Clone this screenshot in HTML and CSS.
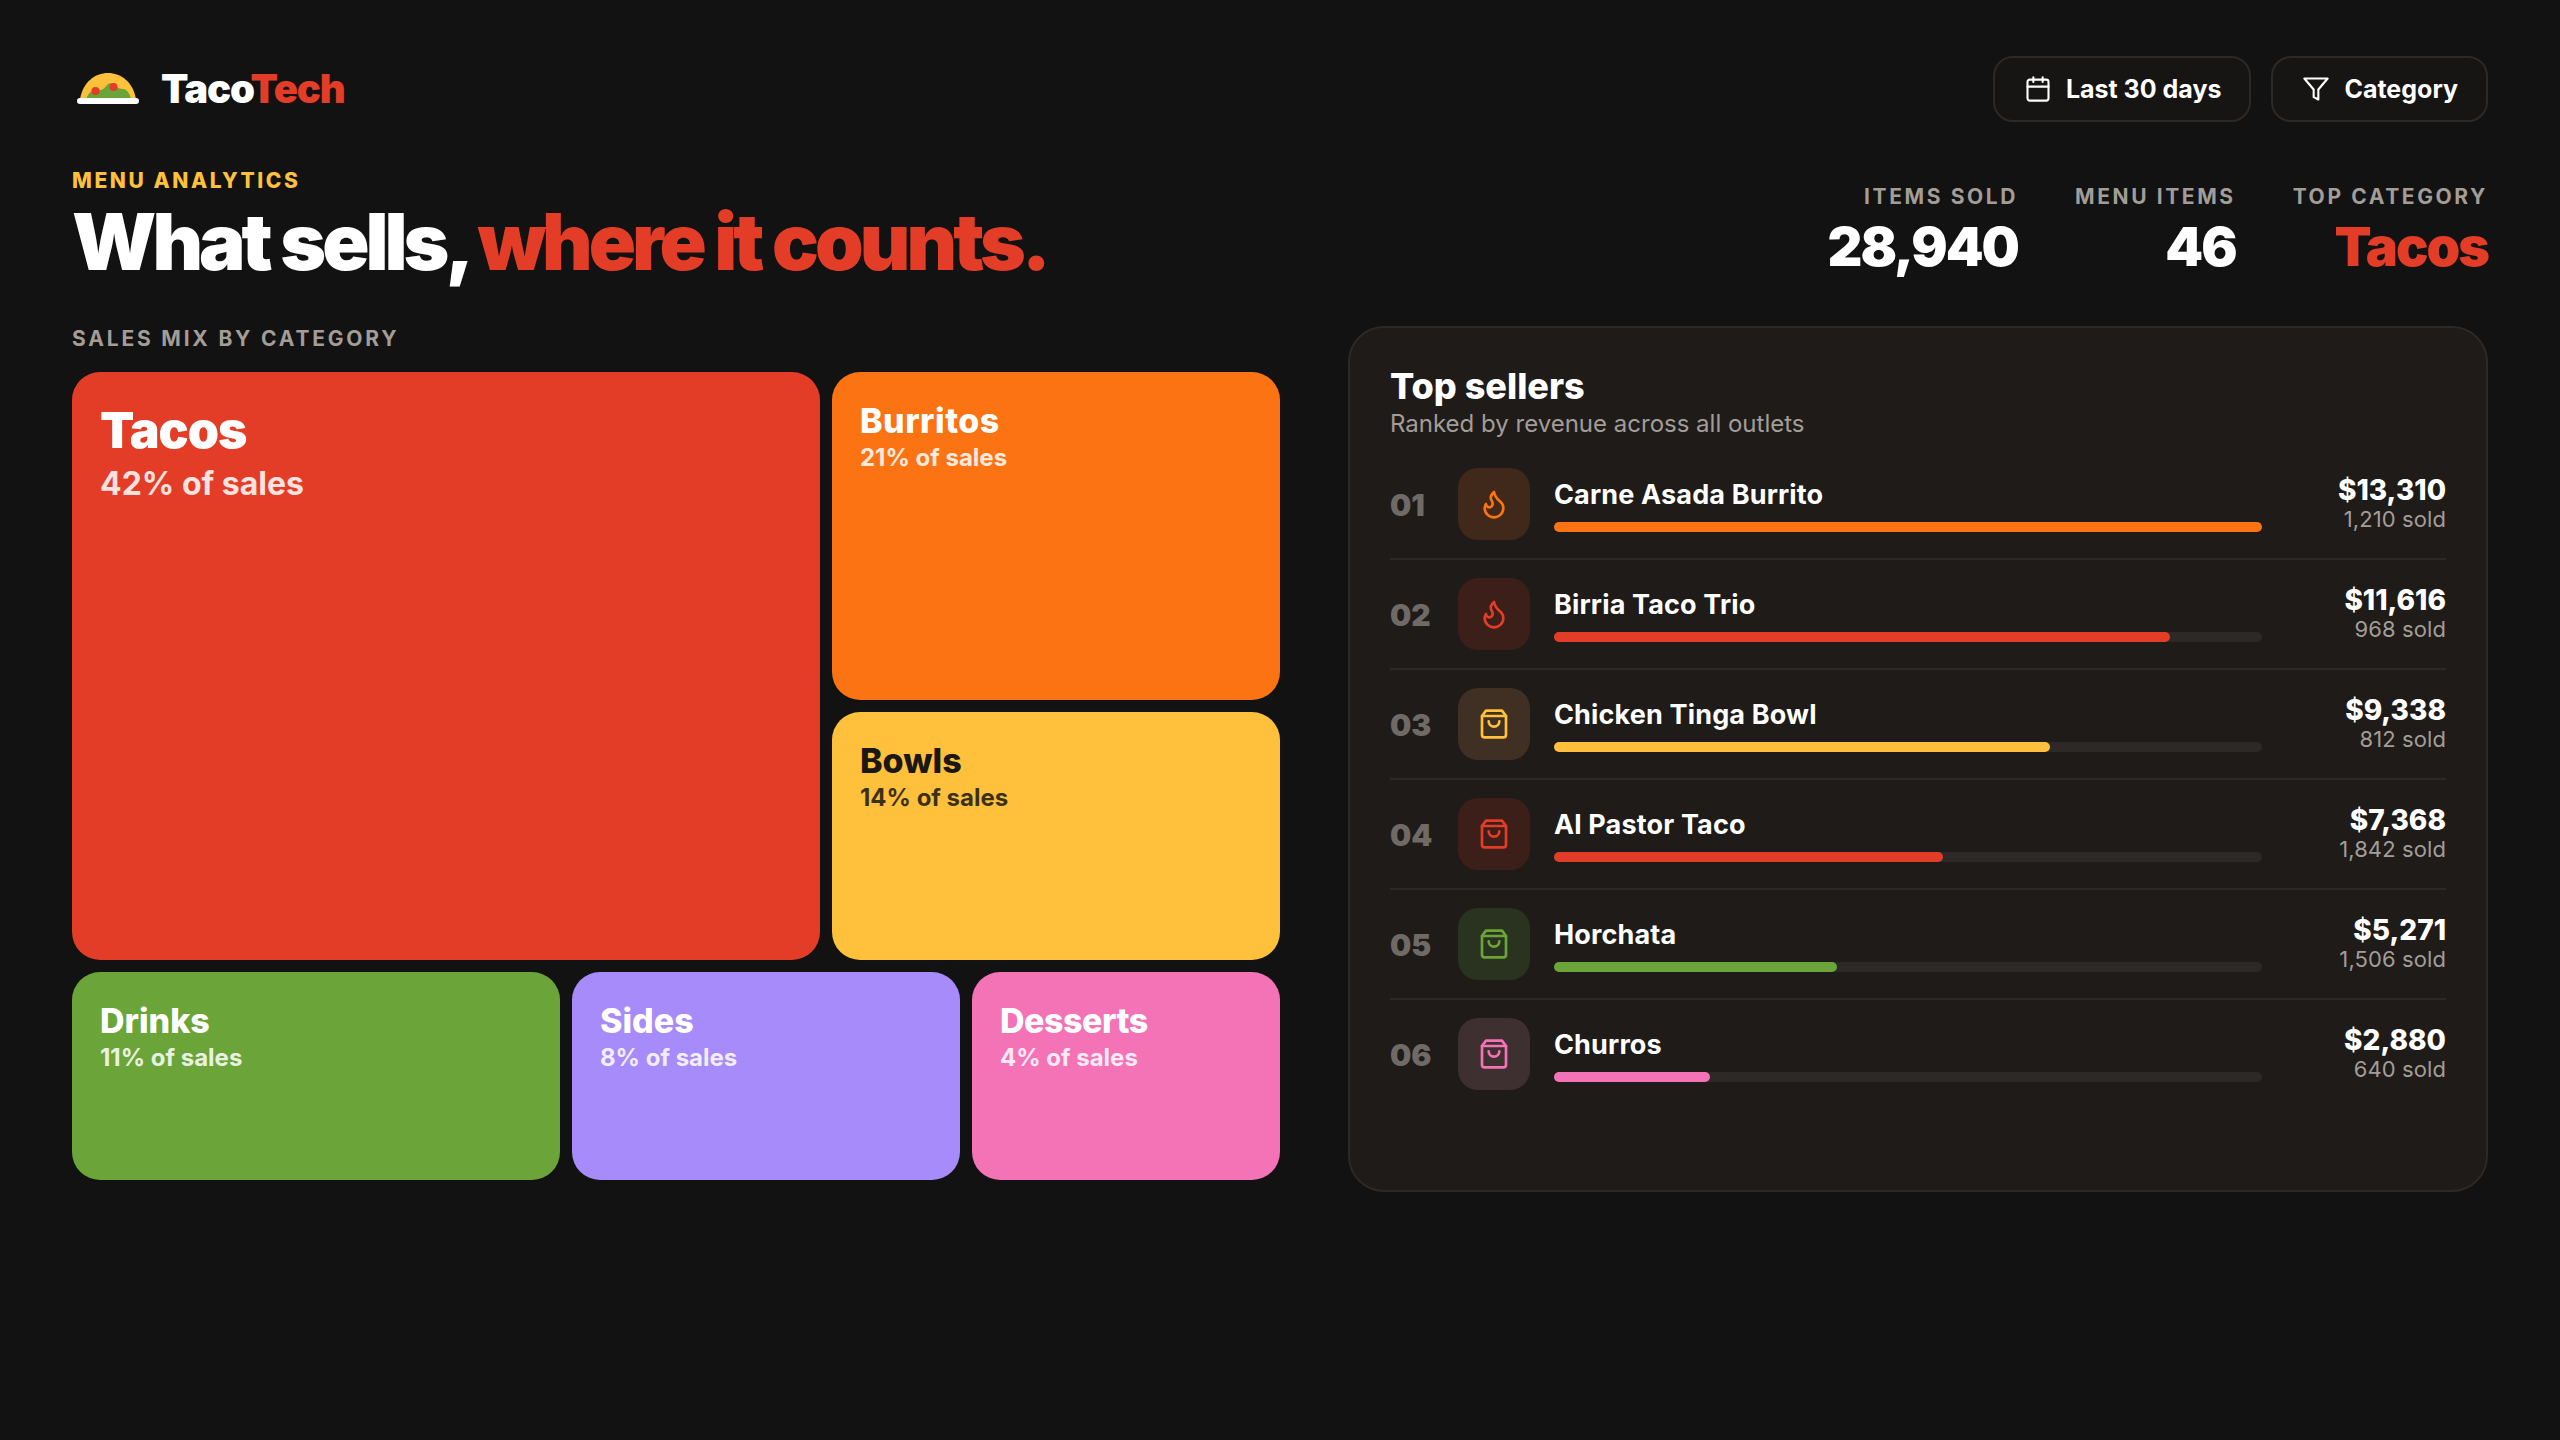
FILE: index.html
```html
<!DOCTYPE html>
<html lang="en">

<head>
    <meta charset="UTF-8">
    <title>TacoTech</title>
    <link rel="stylesheet" href="styles.css">
</head>

<body>
    <svg class="defs" width="0" height="0">
        <symbol id="i-flame" viewBox="0 0 24 24">
            <path d="M8.5 14.5A2.5 2.5 0 0 0 11 12c0-1.38-.5-2-1-3-1.072-2.143-.224-4.054 2-6 .5 2.5 2 4.9 4 6.5 2 1.6 3 3.5 3 5.5a7 7 0 1 1-14 0c0-1.153.433-2.294 1-3a2.5 2.5 0 0 0 2.5 2.5z" />
        </symbol>
        <symbol id="i-bag" viewBox="0 0 24 24">
            <path d="M6 2 3 6v14a2 2 0 0 0 2 2h14a2 2 0 0 0 2-2V6l-3-4z" />
            <path d="M3 6h18" />
            <path d="M16 10a4 4 0 0 1-8 0" />
        </symbol>
    </svg>

    <div class="page">
        <header class="topbar">
            <div class="brand">
                <svg class="brand-logo" viewBox="0 0 62 31" width="62" height="31">
                    <path d="M3 26C6 9 18 0 31 0s25 9 28 26z" fill="#ffc13b" />
                    <path d="M9 26c3-7 7-10 13-9 3 .5 5-1 8-5 2-2.500 6-2 8 0 3 3 5 4 8 4 4 0 7 5 8 10z" fill="#6ba539" />
                    <circle cx="18.500" cy="18" r="4" fill="#e33d28" />
                    <circle cx="36.500" cy="14" r="4" fill="#e33d28" />
                    <rect x="0" y="25" width="62" height="6" rx="3" fill="#fff" />
                </svg>
                <span class="brand-name">Taco<span class="red">Tech</span></span>
            </div>
            <div class="filters">
                <button class="filter">
                    <svg class="filter-icon" viewBox="0 0 24 24">
                        <rect x="3" y="4" width="18" height="18" rx="2" />
                        <path d="M16 2v4M8 2v4M3 10h18" />
                    </svg>
                    Last 30 days
                </button>
                <button class="filter">
                    <svg class="filter-icon" viewBox="0 0 24 24">
                        <path d="M22 3H2l8 9.460V19l4 2v-8.540z" />
                    </svg>
                    Category
                </button>
            </div>
        </header>

        <section class="intro">
            <div>
                <div class="eyebrow">MENU ANALYTICS</div>
                <h1 class="headline">What sells, <span class="red">where it counts.</span></h1>
            </div>
            <div class="stats">
                <div class="stat">
                    <div class="stat-label">ITEMS SOLD</div>
                    <div class="stat-value">28,940</div>
                </div>
                <div class="stat">
                    <div class="stat-label">MENU ITEMS</div>
                    <div class="stat-value">46</div>
                </div>
                <div class="stat">
                    <div class="stat-label">TOP CATEGORY</div>
                    <div class="stat-value red">Tacos</div>
                </div>
            </div>
        </section>

        <main class="content">
            <section class="mix">
                <div class="mix-label">SALES MIX BY CATEGORY</div>
                <div class="treemap">
                    <div class="tree-top">
                        <div class="tile tile-xl c-red">
                            <div class="tile-name">Tacos</div>
                            <div class="tile-pct">42% of sales</div>
                        </div>
                        <div class="tree-stack">
                            <div class="tile tile-burritos c-orange">
                                <div class="tile-name">Burritos</div>
                                <div class="tile-pct">21% of sales</div>
                            </div>
                            <div class="tile tile-bowls c-yellow">
                                <div class="tile-name">Bowls</div>
                                <div class="tile-pct">14% of sales</div>
                            </div>
                        </div>
                    </div>
                    <div class="tree-bottom">
                        <div class="tile tile-drinks c-green">
                            <div class="tile-name">Drinks</div>
                            <div class="tile-pct">11% of sales</div>
                        </div>
                        <div class="tile tile-sides c-purple">
                            <div class="tile-name">Sides</div>
                            <div class="tile-pct">8% of sales</div>
                        </div>
                        <div class="tile tile-desserts c-pink">
                            <div class="tile-name">Desserts</div>
                            <div class="tile-pct">4% of sales</div>
                        </div>
                    </div>
                </div>
            </section>

            <section class="sellers">
                <h2 class="sellers-title">Top sellers</h2>
                <div class="sellers-sub">Ranked by revenue across all outlets</div>

                <div class="row c-orange">
                    <div class="rank">01</div>
                    <div class="row-icon"><svg><use href="#i-flame" /></svg></div>
                    <div class="row-main">
                        <div class="row-name">Carne Asada Burrito</div>
                        <div class="bar"><div class="bar-fill" style="width: 100%"></div></div>
                    </div>
                    <div class="row-nums">
                        <div class="revenue">$13,310</div>
                        <div class="sold">1,210 sold</div>
                    </div>
                </div>
                <div class="row c-red">
                    <div class="rank">02</div>
                    <div class="row-icon"><svg><use href="#i-flame" /></svg></div>
                    <div class="row-main">
                        <div class="row-name">Birria Taco Trio</div>
                        <div class="bar"><div class="bar-fill" style="width: 87%"></div></div>
                    </div>
                    <div class="row-nums">
                        <div class="revenue">$11,616</div>
                        <div class="sold">968 sold</div>
                    </div>
                </div>
                <div class="row c-yellow">
                    <div class="rank">03</div>
                    <div class="row-icon"><svg><use href="#i-bag" /></svg></div>
                    <div class="row-main">
                        <div class="row-name">Chicken Tinga Bowl</div>
                        <div class="bar"><div class="bar-fill" style="width: 70%"></div></div>
                    </div>
                    <div class="row-nums">
                        <div class="revenue">$9,338</div>
                        <div class="sold">812 sold</div>
                    </div>
                </div>
                <div class="row c-red">
                    <div class="rank">04</div>
                    <div class="row-icon"><svg><use href="#i-bag" /></svg></div>
                    <div class="row-main">
                        <div class="row-name">Al Pastor Taco</div>
                        <div class="bar"><div class="bar-fill" style="width: 55%"></div></div>
                    </div>
                    <div class="row-nums">
                        <div class="revenue">$7,368</div>
                        <div class="sold">1,842 sold</div>
                    </div>
                </div>
                <div class="row c-green">
                    <div class="rank">05</div>
                    <div class="row-icon"><svg><use href="#i-bag" /></svg></div>
                    <div class="row-main">
                        <div class="row-name">Horchata</div>
                        <div class="bar"><div class="bar-fill" style="width: 40%"></div></div>
                    </div>
                    <div class="row-nums">
                        <div class="revenue">$5,271</div>
                        <div class="sold">1,506 sold</div>
                    </div>
                </div>
                <div class="row c-pink">
                    <div class="rank">06</div>
                    <div class="row-icon"><svg><use href="#i-bag" /></svg></div>
                    <div class="row-main">
                        <div class="row-name">Churros</div>
                        <div class="bar"><div class="bar-fill" style="width: 22%"></div></div>
                    </div>
                    <div class="row-nums">
                        <div class="revenue">$2,880</div>
                        <div class="sold">640 sold</div>
                    </div>
                </div>
            </section>
        </main>
    </div>
</body>

</html>
```
FILE: styles.css
```css
html,
body {
    margin: 0;
    min-height: 100vh;
    background: #121212;
    color: #fff;
    font-family: Inter, "Liberation Sans", sans-serif;
}

.defs {
    display: block;
    height: 0;
}

.red {
    color: #e33d28;
}

.c-red {
    --tone: #e33d28;
    --soft: #3d1f1a;
}

.c-orange {
    --tone: #fc7314;
    --soft: #40291b;
}

.c-yellow {
    --tone: #ffc13b;
    --soft: #403024;
}

.c-green {
    --tone: #6ba539;
    --soft: #2a3320;
}

.c-purple {
    --tone: #a78bfa;
    --soft: #342c40;
}

.c-pink {
    --tone: #f472b6;
    --soft: #3e2f30;
}

.page {
    padding: 56px 72px;
}

/* top bar */
.topbar {
    display: flex;
    justify-content: space-between;
    align-items: center;
}

.brand {
    display: flex;
    align-items: center;
    gap: 22px;
    padding-left: 5px;
    margin-top: -2px;
}

.brand-name {
    font-size: 40px;
    font-weight: 900;
    letter-spacing: -1.200px;
}

.filters {
    display: flex;
    gap: 20px;
}

.filter {
    display: flex;
    align-items: center;
    gap: 14px;
    height: 66px;
    padding: 0 28px 0 29px;
    border: 2px solid #2c2926;
    border-radius: 20px;
    background: #161513;
    color: #fff;
    font-family: inherit;
    font-size: 25px;
    font-weight: 700;
}

.filter-icon {
    width: 28px;
    height: 28px;
    fill: none;
    stroke: #fff;
    stroke-width: 1.8;
    stroke-linecap: round;
    stroke-linejoin: round;
}

/* title row */
.intro {
    display: flex;
    justify-content: space-between;
    align-items: flex-end;
    margin-top: 46px;
}

.eyebrow {
    color: #ffc13b;
    font-size: 21px;
    font-weight: 800;
    letter-spacing: 2.600px;
}

.headline {
    margin: 0;
    font-size: 78px;
    font-weight: 900;
    line-height: 98px;
    letter-spacing: -4px;
}

.stats {
    display: flex;
    gap: 57px;
    padding-bottom: 15px;
}

.stat {
    text-align: right;
}

.stat-label {
    color: #a39d97;
    font-size: 21px;
    font-weight: 700;
    letter-spacing: 2.600px;
}

.stat-value {
    margin-top: 8px;
    font-size: 54px;
    font-weight: 900;
    line-height: 1.1;
    letter-spacing: -2px;
}

/* main columns */
.content {
    display: grid;
    grid-template-columns: 1208px 1fr;
    gap: 68px;
    margin-top: 35px;
    align-items: start;
}

.mix-label {
    color: #a39d97;
    font-size: 21px;
    font-weight: 700;
    letter-spacing: 2.800px;
    line-height: 26px;
    margin-bottom: 20px;
}

.treemap {
    display: flex;
    flex-direction: column;
    gap: 12px;
}

.tree-top {
    display: flex;
    gap: 12px;
    height: 588px;
}

.tree-stack {
    display: flex;
    flex-direction: column;
    gap: 12px;
    width: 448px;
}

.tree-bottom {
    display: flex;
    gap: 12px;
    height: 208px;
}

.tile {
    box-sizing: border-box;
    padding: 28px;
    border-radius: 28px;
    background: var(--tone);
}

.tile-xl {
    width: 748px;
}

.tile-burritos {
    height: 328px;
}

.tile-bowls {
    height: 248px;
}

.tile-drinks {
    width: 488px;
}

.tile-sides {
    width: 388px;
}

.tile-desserts {
    width: 308px;
}

.tile-name {
    font-size: 34px;
    font-weight: 800;
    line-height: 42px;
}

.tile-burritos .tile-name {
    letter-spacing: 0.500px;
}

.tile-desserts .tile-name {
    letter-spacing: -0.500px;
}

.tile-pct {
    margin-top: 1px;
    font-size: 24px;
    font-weight: 700;
    opacity: 0.85;
}

.tile-xl .tile-name {
    font-size: 50px;
    font-weight: 900;
    line-height: 60px;
    letter-spacing: -1px;
}

.tile-xl .tile-pct {
    margin-top: 4px;
    font-size: 32px;
}

.c-yellow.tile {
    color: #1a1715;
}

/* top sellers */
.sellers {
    box-sizing: border-box;
    height: 866px;
    padding: 36px 40px;
    border: 2px solid #2c2926;
    border-radius: 36px;
    background: #1e1b19;
}

.sellers-title {
    margin: 0;
    font-size: 36px;
    font-weight: 800;
    line-height: 44px;
}

.sellers-sub {
    color: #a39d97;
    font-size: 24px;
    line-height: 31px;
    margin-bottom: 11px;
}

.row {
    display: flex;
    align-items: center;
    gap: 24px;
    padding: 18px 0;
    border-bottom: 2px solid #2c2926;
}

.row:last-child {
    border-bottom: none;
}

.rank {
    width: 44px;
    padding-top: 2px;
    color: #6f6a65;
    font-size: 30px;
    font-weight: 900;
}

.row-icon {
    display: flex;
    align-items: center;
    justify-content: center;
    width: 72px;
    height: 72px;
    border-radius: 20px;
    background: var(--soft);
}

.row-icon svg {
    width: 32px;
    height: 32px;
    fill: none;
    stroke: var(--tone);
    stroke-width: 2;
    stroke-linecap: round;
    stroke-linejoin: round;
}

.row-main {
    flex: 1;
}

.row-name {
    font-size: 27px;
    font-weight: 700;
    line-height: 38px;
    letter-spacing: 0.150px;
    margin-bottom: 8px;
}

.bar {
    height: 10px;
    border-radius: 5px;
    background: #2c2926;
}

.bar-fill {
    height: 100%;
    border-radius: 5px;
    background: var(--tone);
}

.row-nums {
    width: 160px;
    padding-bottom: 2px;
    text-align: right;
}

.revenue {
    font-size: 28px;
    font-weight: 800;
    line-height: 31px;
}

.sold {
    color: #a39d97;
    font-size: 22px;
    line-height: 26px;
    letter-spacing: 0.100px;
}
```
